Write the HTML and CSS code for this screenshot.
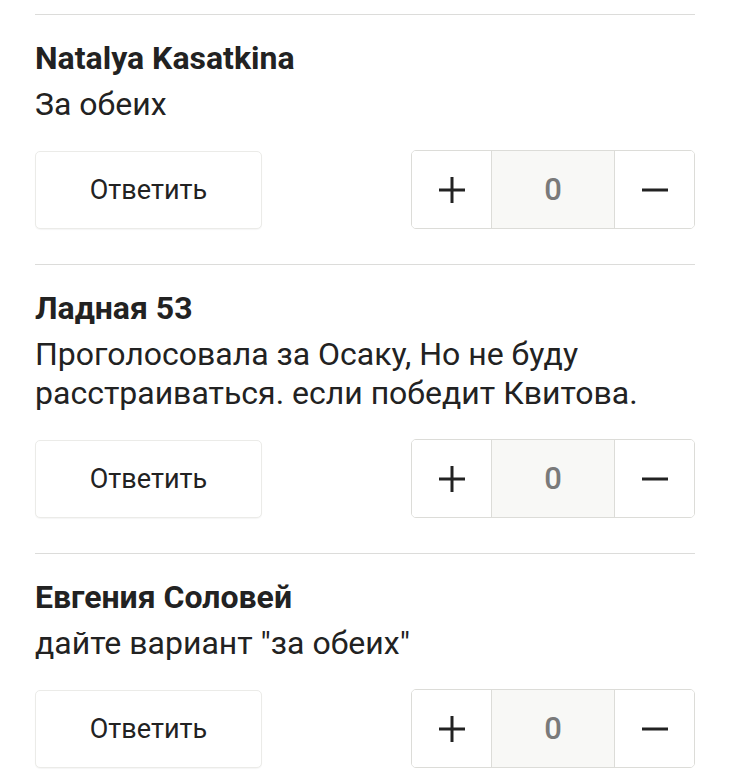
FILE: index.html
```html
<!DOCTYPE html>
<html lang="ru">
<head>
<meta charset="utf-8">
<link rel="stylesheet" href="styles.css">
</head>
<body>
<div class="list">
  <div class="comment">
    <div class="author">Natalya Kasatkina</div>
    <div class="text">За обеих</div>
    <div class="actions">
      <button class="reply">Ответить</button>
      <div class="counter">
        <span class="seg btn"><svg width="26" height="26" viewBox="0 0 26 26"><path d="M13 0v26M0 13h26" stroke="#222" stroke-width="3"/></svg></span>
        <span class="seg value">0</span>
        <span class="seg btn"><svg width="26" height="26" viewBox="0 0 26 26"><path d="M0 13h26" stroke="#222" stroke-width="3"/></svg></span>
      </div>
    </div>
  </div>
  <div class="comment">
    <div class="author">Ладная 53</div>
    <div class="text">Проголосовала за Осаку, Но не буду расстраиваться. если победит Квитова.</div>
    <div class="actions">
      <button class="reply">Ответить</button>
      <div class="counter">
        <span class="seg btn"><svg width="26" height="26" viewBox="0 0 26 26"><path d="M13 0v26M0 13h26" stroke="#222" stroke-width="3"/></svg></span>
        <span class="seg value">0</span>
        <span class="seg btn"><svg width="26" height="26" viewBox="0 0 26 26"><path d="M0 13h26" stroke="#222" stroke-width="3"/></svg></span>
      </div>
    </div>
  </div>
  <div class="comment">
    <div class="author">Евгения Соловей</div>
    <div class="text">дайте вариант "за обеих"</div>
    <div class="actions">
      <button class="reply">Ответить</button>
      <div class="counter">
        <span class="seg btn"><svg width="26" height="26" viewBox="0 0 26 26"><path d="M13 0v26M0 13h26" stroke="#222" stroke-width="3"/></svg></span>
        <span class="seg value">0</span>
        <span class="seg btn"><svg width="26" height="26" viewBox="0 0 26 26"><path d="M0 13h26" stroke="#222" stroke-width="3"/></svg></span>
      </div>
    </div>
  </div>
</div>
</body>
</html>
```
FILE: styles.css
```css
html, body {
  margin: 0;
  padding: 0;
  background: #fff;
}
body {
  font-family: Roboto, "Noto Sans", sans-serif;
  color: #222;
}
.list {
  padding: 14px 35px 0;
}
.comment {
  border-top: 1px solid #dcdcda;
  padding-top: 24px;
  margin-bottom: 35px;
}
.author {
  font-size: 32px;
  line-height: 38px;
  font-weight: 700;
  color: #222;
}
.text {
  margin-top: 8px;
  font-size: 32px;
  line-height: 39px;
  color: #222;
  max-width: 640px;
}
.actions {
  margin-top: 26px;
  display: flex;
  justify-content: space-between;
  align-items: center;
}
.reply {
  width: 227px;
  height: 78px;
  box-sizing: border-box;
  border: 1px solid #ebebe8;
  border-radius: 5px;
  background: #fff;
  box-shadow: 0 1px 1px rgba(0, 0, 0, 0.04);
  font-family: Roboto, "Noto Sans", sans-serif;
  font-size: 27px;
  color: #222;
  padding: 0;
}
.counter {
  display: flex;
  width: 284px;
  height: 79px;
  box-sizing: border-box;
  border: 1px solid #dcdcd8;
  border-radius: 5px;
  overflow: hidden;
}
.seg {
  display: flex;
  align-items: center;
  justify-content: center;
}
.btn {
  width: 79px;
  background: #fff;
}
.value {
  flex: 1;
  background: #f8f8f6;
  border-left: 1px solid #dcdcd8;
  border-right: 1px solid #dcdcd8;
  font-size: 31px;
  font-weight: 500;
  color: #7a7a7a;
}
```
